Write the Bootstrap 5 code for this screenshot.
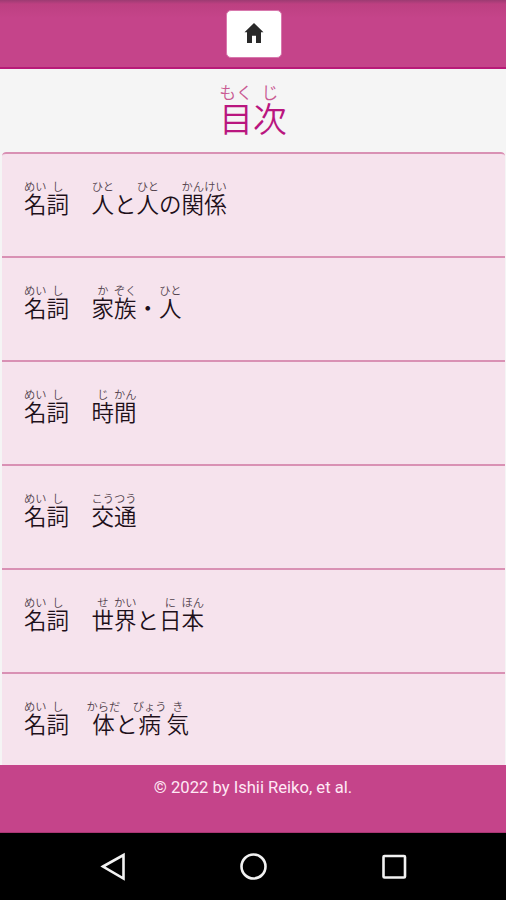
<!DOCTYPE html>
<html lang="ja">
<head>
<meta charset="utf-8">
<meta name="viewport" content="width=device-width, initial-scale=1">
<title>目次</title>
<link rel="stylesheet" href="https://cdn.jsdelivr.net/npm/bootstrap@5.3.0/dist/css/bootstrap.min.css">
<style>
body{height:900px;background:#f5f5f5;font-family:Roboto,"Noto Sans CJK JP",sans-serif}
.app-bar{height:69px;padding-top:10px;background:linear-gradient(#9c3b72 0,#bd4081 4px,#c5448a 18px);border-bottom:2px solid #b81a78}
.home-btn{width:56px;height:48px;margin-left:2px;background:#fff;border:1px solid #d878ad;border-radius:5px}
.home-btn:hover{background:#fff}
.home-btn svg{margin-bottom:2px}
.page-title{height:83px;color:#b9167f;font-size:33.75px;line-height:38px;font-weight:350;padding-top:33px}
.page-title rt{color:#c95a92}
.toc{height:613px;margin:0 1px 0 2px;background:#f6e3ed;border-radius:4px 4px 0 0;overflow:hidden}
.toc .toc-row{height:104px;padding:39px 22px 0;background:#f6e3ed;border:0;border-top:2px solid #d991b4;border-radius:0;color:#1e101a;font-size:22.5px;line-height:25px;font-weight:350}
.toc .toc-row:first-child{border-radius:4px 4px 0 0}
rt{font-size:50%;color:#54434e;line-height:.8}
.foot{height:68px;background:#c5448a;border-bottom:1px solid #a93673;color:#ffe9f5;font-size:16.6px;line-height:20px;padding-top:13px}
.sys-nav{height:67px;background:#000}
</style>
<script src="https://cdn.jsdelivr.net/npm/bootstrap@5.3.0/dist/js/bootstrap.bundle.min.js"></script>
</head>
<body class="d-flex flex-column overflow-hidden">
<header class="app-bar flex-shrink-0 text-center">
<a class="btn home-btn d-inline-flex align-items-center justify-content-center p-0" href="#" aria-label="Home">
<svg width="20" height="21" viewBox="0 0 20 21"><path fill="#292929" d="M10 0 19.5 9.3H17V20H12V12.8H8V20H3V9.3H.5Z"/></svg></a>
</header>
<h1 class="page-title flex-shrink-0 text-center mb-0"><ruby>目<rt>もく</rt></ruby><ruby>次<rt>じ</rt></ruby></h1>
<main class="toc list-group flex-shrink-0">
<a class="toc-row list-group-item flex-shrink-0" href="#"><ruby>名<rt>めい</rt></ruby><ruby>詞<rt>し</rt></ruby>　<ruby>人<rt>ひと</rt></ruby>と<ruby>人<rt>ひと</rt></ruby>の<ruby>関<rt>かん</rt></ruby><ruby>係<rt>けい</rt></ruby></a>
<a class="toc-row list-group-item flex-shrink-0" href="#"><ruby>名<rt>めい</rt></ruby><ruby>詞<rt>し</rt></ruby>　<ruby>家<rt>か</rt></ruby><ruby>族<rt>ぞく</rt></ruby>・<ruby>人<rt>ひと</rt></ruby></a>
<a class="toc-row list-group-item flex-shrink-0" href="#"><ruby>名<rt>めい</rt></ruby><ruby>詞<rt>し</rt></ruby>　<ruby>時<rt>じ</rt></ruby><ruby>間<rt>かん</rt></ruby></a>
<a class="toc-row list-group-item flex-shrink-0" href="#"><ruby>名<rt>めい</rt></ruby><ruby>詞<rt>し</rt></ruby>　<ruby>交<rt>こう</rt></ruby><ruby>通<rt>つう</rt></ruby></a>
<a class="toc-row list-group-item flex-shrink-0" href="#"><ruby>名<rt>めい</rt></ruby><ruby>詞<rt>し</rt></ruby>　<ruby>世<rt>せ</rt></ruby><ruby>界<rt>かい</rt></ruby>と<ruby>日<rt>に</rt></ruby><ruby>本<rt>ほん</rt></ruby></a>
<a class="toc-row list-group-item flex-shrink-0" href="#"><ruby>名<rt>めい</rt></ruby><ruby>詞<rt>し</rt></ruby>　<ruby>体<rt>からだ</rt></ruby>と<ruby>病<rt>びょう</rt></ruby><ruby>気<rt>き</rt></ruby></a>
</main>
<footer class="foot flex-shrink-0 text-center">© 2022 by Ishii Reiko, et al.</footer>
<nav class="sys-nav flex-shrink-0">
<svg class="d-block" width="506" height="67" viewBox="0 0 506 67" fill="none" stroke="#f2f2f2" stroke-width="2.6"><path d="M103 33.5 123.5 22V45.5Z"/><circle cx="253.5" cy="33.5" r="12"/><rect x="383.5" y="23" width="21.5" height="21.5" rx="1"/></svg>
</nav>
</body>
</html>
